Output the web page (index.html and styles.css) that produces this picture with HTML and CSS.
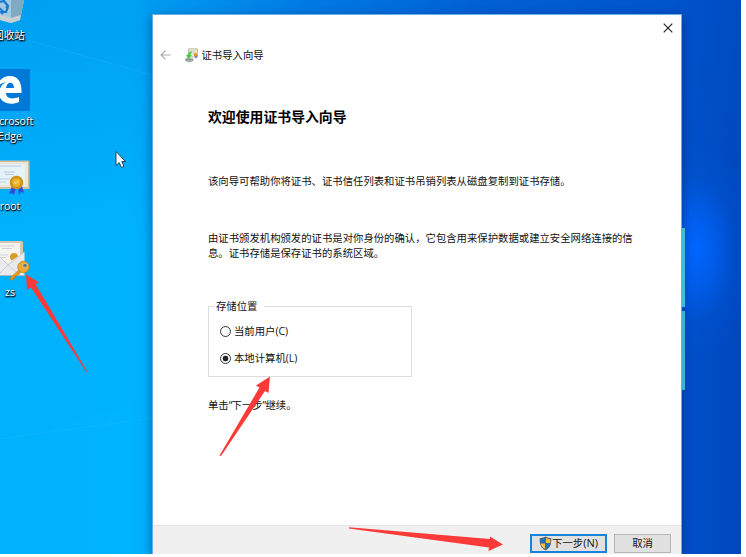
FILE: index.html
```html
<!DOCTYPE html>
<html lang="zh-CN">
<head>
<meta charset="utf-8">
<title>证书导入向导</title>
<link rel="stylesheet" href="styles.css">
</head>
<body>
<main class="desktop">
  <svg class="rays" viewBox="0 0 741 554">
    <path d="M0 30L28 40 152 75V400L0 439z" fill="#00b0ff" opacity=".1"/>
    <path d="M28 40L152 75" stroke="#5cc4ff" stroke-width=".8" opacity=".25"/>
    <path d="M0 439L152 418" stroke="#3cc8ff" stroke-width=".8" opacity=".25"/>
  </svg>

  <div class="shortcut recycle">
    <svg width="30" height="24" viewBox="0 0 30 24">
      <path d="M0 0H24L20 20 11 23 0 20z" fill="#a5c9df"/>
      <path d="M11 0H24L20 20 11 23z" fill="#80a9c4"/>
      <path d="M0 15L11 18 20.500 15 20 20 11 23 0 20z" fill="#c9d0d1"/>
      <path d="M0 2L4 1 8 6 6 8M8 7L6 12 2 12M3 10L1 12 3 14M0 8L1 10" fill="none" stroke="#1479d2" stroke-width="2.200"/>
    </svg>
    <span class="name">回收站</span>
  </div>
  <div class="shortcut edge">
    <svg width="30" height="42" viewBox="0 0 30 42">
      <path d="M0 0H30V42H0z" fill="#0078d7"/>
      <path d="M-3 18C-1 10 4 7 10 7 18 7 22 13 21.500 24H6C6 29 11 31 19 28V33C10 37 0 34 -1 25 -1 19 2 15 6 13 2 14 -1 16 -3 18zM6 19H14C14 12 7 12 6 19z" fill="#fff" fill-rule="evenodd"/>
    </svg>
    <span class="name">Microsoft<br>Edge</span>
  </div>
  <div class="shortcut root">
    <svg width="30" height="36" viewBox="0 0 30 36">
      <path d="M0 .5H28.500Q29.500 .5 29.500 2V29H0z" fill="#c9c0aa"/>
      <path d="M0 2H28V27H0z" fill="#eee6d2"/>
      <path d="M0 4H25V25H0z" fill="#e5f3f8"/>
      <path d="M0 6H21M4 12H15M5 14.500H14M0 19H10M0 22H6" stroke="#b9cae2" stroke-width="1"/>
      <path d="M12 26L9 34 12 33 14 35 16 27zM18 27L19 35 21 32 24 33 22 26z" fill="#284fdc"/>
      <circle cx="16.500" cy="22.500" r="6.800" fill="#cf9417"/>
      <circle cx="16.500" cy="22.500" r="4.200" fill="#e8b52c"/>
      <path d="M14 22L16 23.500 19 20.500" stroke="#fff0a0" fill="none"/>
    </svg>
    <span class="name">root</span>
  </div>
  <div class="shortcut zs">
    <svg width="30" height="41" viewBox="0 0 30 41">
      <path d="M0 1H22Q23 1 23 3V34H0z" fill="#d4c8b1"/>
      <path d="M0 3H20V28H0z" fill="#f5f3ec"/>
      <path d="M0 6H15M2 8.500H12M0 15H8M0 17.500H6" stroke="#ced3e0"/>
      <circle cx="14" cy="17" r="4" fill="#d79d24"/>
      <path d="M0 17L8 23 24.500 12V35.500H0z" fill="#e9eaec"/>
      <path d="M0 17L8 25 24.500 12M0 33L8 25 20 35" fill="none" stroke="#c3c7ca" stroke-width=".8"/>
      <path d="M0 35.500H24.500" stroke="#b0b4b7"/>
      <path d="M20 29L10.500 37.500V40H13V38H15V36H17L22 31" fill="#e19b22" stroke="#b57718" stroke-width=".5"/>
      <circle cx="23.500" cy="27" r="5.800" fill="#eda934" stroke="#bb7d1d" stroke-width=".7"/>
      <circle cx="25" cy="25.500" r="2.300" fill="#557f94" stroke="#f8cf75" stroke-width=".8"/>
    </svg>
    <span class="name">zs</span>
  </div>

  <div class="backdrop"><i></i><i></i></div>

  <section class="dialog">
    <header>
      <div class="controls">
        <svg width="10" height="10" viewBox="0 0 10 10"><path d="M.7 .7L9.300 9.300M9.300 .7L.7 9.300" stroke="#222" stroke-width="1.150"/></svg>
      </div>
      <div class="titlebar">
        <svg class="back" width="11" height="10" viewBox="0 0 11 10"><path d="M5.500 .6L1 5 5.500 9.400M1 5H10.500" fill="none" stroke="#a9a9a9" stroke-width="1.100"/></svg>
        <svg class="wizard" width="15" height="15" viewBox="0 0 15 15">
          <path d="M4.500 .8H13.500V9H4.500z" fill="#f2ecd7" stroke="#b8ae90" stroke-width=".8"/>
          <path d="M6 3H12M6 5H10" stroke="#b9c4cd" stroke-width=".8"/>
          <path d="M10 7L12 11 13.500 7" fill="#5877bf"/>
          <circle cx="11.500" cy="6.500" r="1.700" fill="#e59a20"/>
          <path d="M1 11L4 9.500 9.500 11V13L5.500 14.500 1 13z" fill="#a6adad"/>
          <path d="M1.500 11L5 12 9 11" stroke="#7b8585" fill="none" stroke-width=".7"/>
          <path d="M6 3.500L3.300 7H2L4.500 11 8 7H6L8 3.500z" fill="#42cc3d"/>
        </svg>
        <span>证书导入向导</span>
      </div>
    </header>
    <div class="content">
      <h1>欢迎使用证书导入向导</h1>
      <p class="intro">该向导可帮助你将证书、证书信任列表和证书吊销列表从磁盘复制到证书存储。</p>
      <p class="detail">由证书颁发机构颁发的证书是对你身份的确认，它包含用来保护数据或建立安全网络连接的信<br>息。证书存储是保存证书的系统区域。</p>
      <div class="group">
        <span class="legend">存储位置</span>
        <label><input type="radio" name="store"><span>当前用户<b>(C)</b></span></label>
        <label><input type="radio" name="store" checked><span>本地计算机<b>(L)</b></span></label>
      </div>
      <p class="hint">单击<b>“</b>下一步<b>”</b>继续。</p>
    </div>
    <footer>
      <button class="next">
        <svg width="13" height="15" viewBox="0 0 13 15">
          <path d="M6.500 .5C4.500 2 2.500 2 .7 2.300 .5 8.500 2 12 6.500 14.500 11 12 12.500 8.500 12.300 2.300 10.500 2 8.500 2 6.500 .5z" fill="#58616a"/>
          <path d="M6 1.900C4.500 2.800 3 3 1.700 3.200V7H6z" fill="#1673c9"/>
          <path d="M7 1.900C8.500 2.800 10 3 11.300 3.200V7H7z" fill="#fcc238"/>
          <path d="M1.800 7.500H6V13C3.500 11.500 2.100 10 1.800 7.500z" fill="#fcc238"/>
          <path d="M7 7.500H11.200C10.900 10 9.500 11.500 7 13z" fill="#1673c9"/>
        </svg>
        <span>下一步<b>(N)</b></span>
      </button>
      <button>取消</button>
    </footer>
  </section>

  <svg class="overlay" viewBox="0 0 741 554">
    <g fill="#fc3a37">
      <path d="M26 274.500L39 282.500 35.500 284 87.500 372 86 371.500 31 287.500 27 290z"/>
      <path d="M270 376.500L268.500 393 265 391 221 456 219.500 455.500 259.500 387.500 256 385.500z"/>
      <path d="M349 527.200L490 539 490 536.500 503 544.500 488.500 551 489 547.500 349 528.500z"/>
    </g>
    <path d="M116 151.500V165.500L119.200 162.500 121.500 167.500 124 166.400 121.800 161.600H125.600z" fill="#fff" stroke="#16344a" stroke-width=".9"/>
  </svg>
</main>
</body>
</html>
```
FILE: styles.css
```css
* { box-sizing: border-box; }

body {
  margin: 0;
  background: #fff;
  overflow: hidden;
  font-family: "Open Sans", "Noto Sans CJK SC", sans-serif;
  font-size: 10.37px;
  line-height: 14.5px;
  color: #111;
}

p, h1 { margin: 0; }
b { font-weight: 400; }
svg { display: block; flex: none; }

.desktop {
  position: relative;
  width: 741px;
  height: 554px;
  overflow: hidden;
  background:
    radial-gradient(ellipse 60px 110px at 696px 250px, #0066ff 0%, rgba(0, 100, 250, .7) 30%, rgba(0, 90, 225, .25) 65%, transparent 100%),
    linear-gradient(180deg, rgba(0, 90, 205, .22), transparent 45%),
    linear-gradient(90deg, #00b2fb 0, #00b4fd 130px, #0084ea 300px, #0062d6 480px, #0052cc 670px, #0047bd 741px);
}

.rays, .overlay {
  position: absolute;
  inset: 0;
  width: 741px;
  height: 554px;
}

.overlay { pointer-events: none; }

.shortcut {
  position: absolute;
  left: 0;
  width: 60px;
}

.shortcut .name {
  display: block;
  width: 70px;
  margin-left: -25px;
  color: #fff;
  font-size: 10.5px;
  line-height: 15px;
  text-align: center;
  text-shadow: 0 1px 2px #000, 1px 1px 1px #000;
}

.recycle { top: 0; }
.recycle .name { margin-top: 4px; margin-left: -26px; }
.edge { top: 69px; }
.edge .name { margin-top: 3px; }
.root { top: 160px; }
.root .name { margin-top: 3px; }
.zs { top: 240px; }
.zs .name { margin-top: 4px; }

.backdrop {
  position: absolute;
  z-index: 1;
  left: 682px;
  top: 228px;
  display: grid;
  gap: 4px;
}

.backdrop i {
  width: 3px;
  height: 79px;
  background: #35b4d6;
}

.backdrop i:first-child { background: #3cc0d4; }

.dialog {
  position: absolute;
  left: 152px;
  top: 14px;
  width: 530px;
  height: 541px;
  display: flex;
  flex-direction: column;
  border: 1px solid #6aaee6;
  background: #fff;
  box-shadow: 0 3px 10px rgba(0, 20, 70, .45);
}

.controls {
  display: flex;
  justify-content: flex-end;
  padding: 8px 8px 0 0;
  height: 30px;
}

.titlebar {
  display: flex;
  align-items: center;
  height: 20px;
  padding-left: 7px;
}

.wizard { margin: 0 3px 0 12.5px; }

.content {
  flex: 1;
  padding: 41px 0 0 55px;
}

h1 {
  font-size: 13.87px;
  line-height: 22px;
  font-weight: 700;
  color: #000;
}

.intro { margin-top: 46px; white-space: nowrap; }
.detail { margin-top: 42px; white-space: nowrap; line-height: 15px; }

.group {
  width: 204px;
  height: 71px;
  margin-top: 45px;
  padding-left: 11px;
  border: 1px solid #dcdcdc;
}

.legend {
  display: block;
  width: 50px;
  height: 14px;
  margin: -8px 0 0 -6px;
  padding-left: 2px;
  background: #fff;
}

.group label {
  display: flex;
  align-items: center;
  gap: 3px;
  height: 14px;
  margin-top: 11.5px;
}

.group label + label { margin-top: 13px; }

.group input {
  appearance: none;
  flex: none;
  width: 11px;
  height: 11px;
  margin: 0;
  border: 1px solid #333;
  border-radius: 50%;
  background: #fff;
}

.group input:checked {
  background: radial-gradient(circle, #222 0 2.6px, #fff 3.2px);
}

.hint { margin-top: 21.5px; }
.hint b { letter-spacing: -.8px; }

footer {
  display: flex;
  justify-content: flex-end;
  gap: 7px;
  height: 29px;
  padding: 8px 10px 0 0;
  border-top: 1px solid #e3e3e3;
  background: #f0f0f0;
}

button {
  display: flex;
  align-items: center;
  justify-content: center;
  width: 57px;
  height: 19px;
  padding: 0;
  border: 1px solid #b4b4b4;
  background: #e1e1e1;
  font: inherit;
  color: #111;
}

.next {
  width: 77px;
  border: 2px solid #1683dc;
}

.next b { font-size: 11px; }
```
